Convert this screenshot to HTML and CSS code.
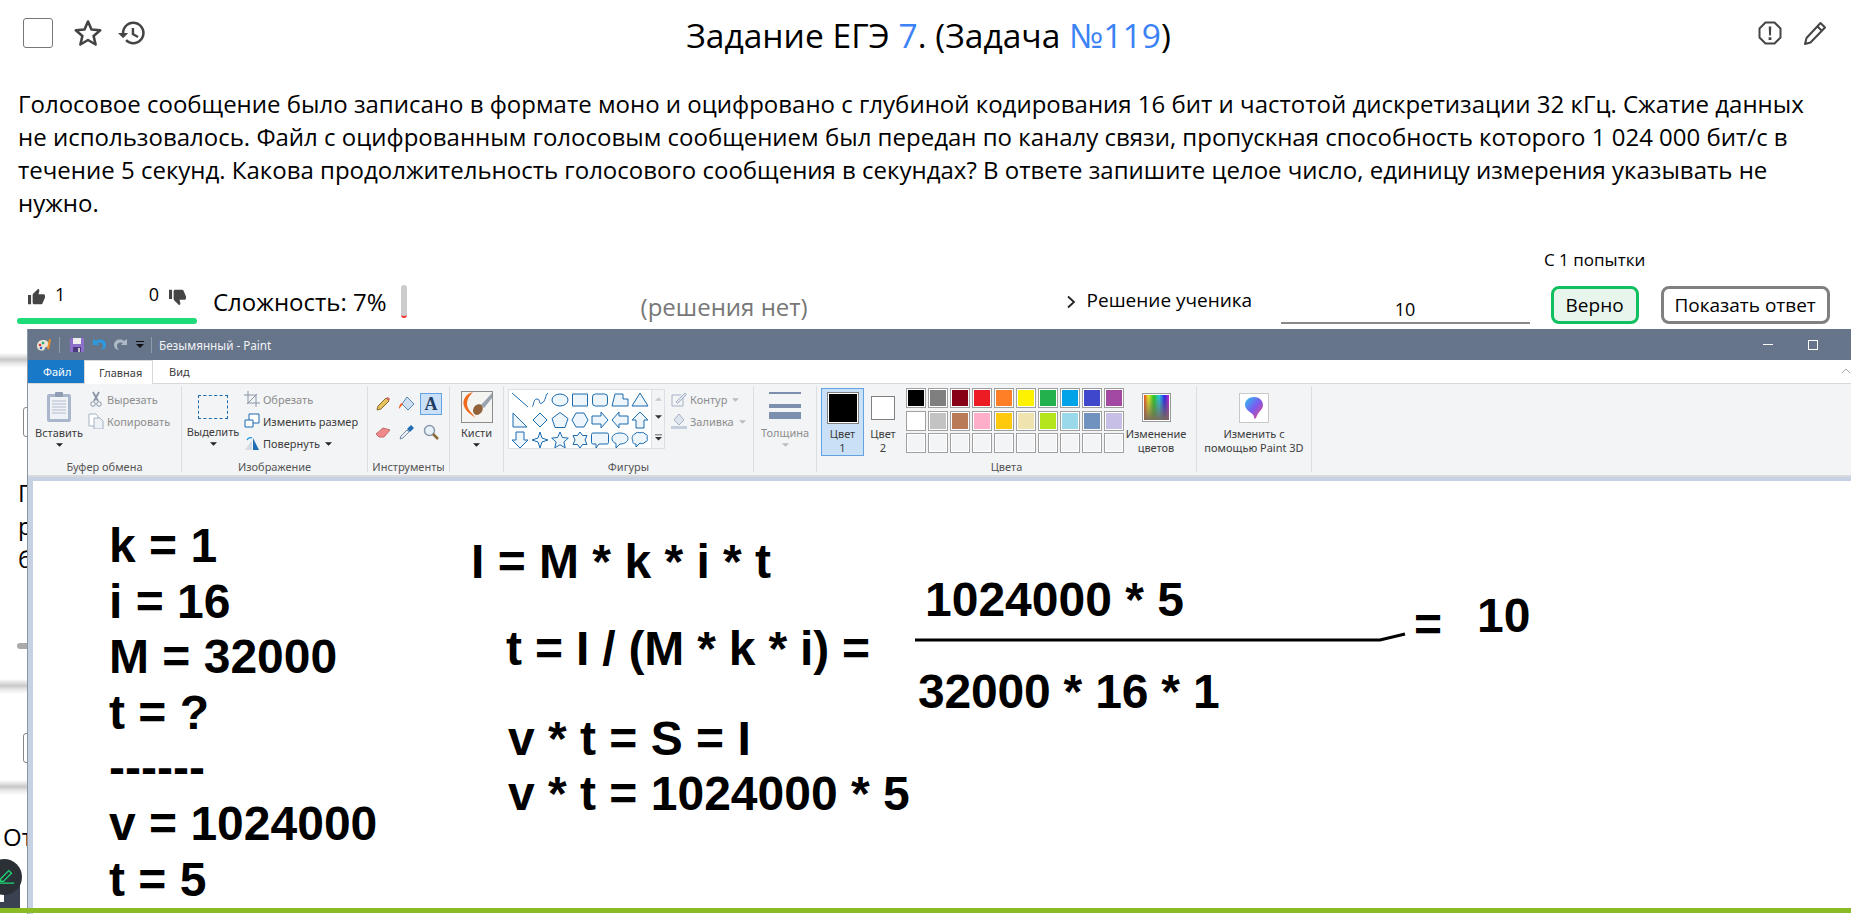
FILE: index.html
```html
<!DOCTYPE html>
<html lang="ru">
<head>
    <meta charset="UTF-8">
    <meta name="viewport" content="width=device-width, initial-scale=1.0">
    <title>Задание ЕГЭ 7</title>
    <link rel="stylesheet" href="styles.css">
</head>
<body>

    <svg class="defs" width="0" height="0">
        <symbol id="caret" viewBox="0 0 8 4"><path d="M0 0h8L4 4z"/></symbol>
    </svg>

    <header class="task-head">
        <div class="head-left">
            <span class="check"></span>
            <svg class="ico star" viewBox="0 0 30 30"><path d="M15 3.5l3.5 8 8.7.8-6.6 5.7 2 8.5-7.6-4.5-7.6 4.5 2-8.5-6.6-5.7 8.7-.8z"/></svg>
            <svg class="ico history" viewBox="1 3 22 18"><path d="M13 3a9 9 0 0 0-9 9H1l3.89 3.89.07.14L9 12H6c0-3.87 3.13-7 7-7s7 3.13 7 7-3.13 7-7 7c-1.93 0-3.68-.79-4.94-2.06l-1.42 1.42A8.954 8.954 0 0 0 13 21a9 9 0 0 0 0-18zm-1.2 5v5.4l4.48 2.54.9-1.5-3.5-2V8h-1.88z"/></svg>
        </div>
        <h1 class="task-title">Задание ЕГЭ <a class="num">7</a>. (Задача <a class="num">№119</a>)</h1>
        <div class="head-right">
            <svg class="ico alert" viewBox="0 0 24 24"><path class="line" d="M7.5 1.5h9l6 6v9l-6 6h-9l-6-6v-9z"/><path d="M10.7 5.5h2.6l-.4 9h-1.8zM10.6 16.3h2.8v2.6h-2.8z"/></svg>
            <svg class="ico pen" viewBox="0 0 24 24"><path class="line" d="M17.5 2L22 6.5 7.5 21.5 2 23l1.5-6zM14.5 5.5l4.5 4.5"/></svg>
        </div>
    </header>

    <p class="task-text">Голосовое сообщение было записано в формате моно и оцифровано с глубиной кодирования 16 бит и частотой дискретизации 32 кГц. Сжатие данных не использовалось. Файл с оцифрованным голосовым сообщением был передан по каналу связи, пропускная способность которого 1 024 000 бит/с в течение 5 секунд. Какова продолжительность голосового сообщения в секундах? В ответе запишите целое число, единицу измерения указывать не нужно.</p>

    <div class="attempts">С 1 попытки</div>

    <section class="task-bar">
        <div class="votes">
            <div class="votes-row">
                <svg class="thumb" viewBox="1 1 22 20"><path d="M1 21h4V9H1v12zm22-11c0-1.1-.9-2-2-2h-6.31l.95-4.57.03-.32c0-.41-.17-.79-.44-1.06L14.17 1 7.59 7.59C7.22 7.95 7 8.45 7 9v10c0 1.1.9 2 2 2h9c.83 0 1.54-.5 1.84-1.22l3.02-7.05c.09-.23.14-.47.14-.73v-2z"/></svg>
                <span class="vote-up">1</span>
                <span class="vote-down">0</span>
                <svg class="thumb down" viewBox="1 1 22 20"><path d="M1 21h4V9H1v12zm22-11c0-1.1-.9-2-2-2h-6.31l.95-4.57.03-.32c0-.41-.17-.79-.44-1.06L14.17 1 7.59 7.59C7.22 7.95 7 8.45 7 9v10c0 1.1.9 2 2 2h9c.83 0 1.54-.5 1.84-1.22l3.02-7.05c.09-.23.14-.47.14-.73v-2z"/></svg>
            </div>
            <div class="votes-bar"></div>
        </div>
        <div class="difficulty">Сложность: 7%</div>
        <div class="difficulty-meter"></div>
        <div class="no-solution">(решения нет)</div>
        <div class="student">
            <svg class="chevron" viewBox="0 0 10 14"><path d="M2 1.5L8 7l-6 5.5"/></svg>
            <span>Решение ученика</span>
        </div>
        <div class="answer">10</div>
        <button class="btn btn-ok">Верно</button>
        <button class="btn btn-show">Показать ответ</button>
    </section>

    <section class="under">
        <div class="band"></div>
        <div class="under-box"></div>
        <p class="under-text">Г<br>р<br>б</p>
        <div class="under-pill"></div>
        <div class="band band-2"></div>
        <div class="under-box"></div>
        <div class="band band-3"></div>
        <p class="under-from">От</p>
    </section>

    <div class="dock">
        <div class="dock-tile"></div>
        <div class="dock-round">
            <svg viewBox="0 0 20 20"><path d="M3 13l9-9 3 3-9 9H3zM1 18h17"/></svg>
        </div>
    </div>

    <div class="paint">
        <div class="titlebar">
            <svg class="qa" viewBox="0 0 16 16"><path fill="#e9e3d4" d="M1 9c0-4 3-6 6-6 4 0 6 2 6 5 0 2-2 2-3 2s-1 2-2 3c-2 1-7 1-7-4z"/><circle cx="4" cy="8" r="1.3" fill="#d33"/><circle cx="7" cy="6" r="1.3" fill="#2a7"/><circle cx="5" cy="11" r="1.3" fill="#36c"/><path d="M11 12l2-10 2 .5-2 10z" fill="#f0902a"/></svg>
            <i class="qa-sep"></i>
            <svg class="qa qa-save" viewBox="0 0 14 14"><path fill="#8b6fc9" d="M0 0h14v14H0z"/><path fill="#eee" d="M3 0h8v6H3z"/><path fill="#4a3a80" d="M3 9h8v5H3z"/><path fill="#ccc" d="M8 10h2v4H8z"/></svg>
            <svg class="qa qa-undo" viewBox="0 0 14 14"><path d="M1 1v6h6L5 5c3-1.5 6 0 6 3 0 2-1 3-2 4 4-.5 5-3 5-5 0-5-6-7-10-4z" fill="#2b9be0"/></svg>
            <svg class="qa qa-redo" viewBox="0 0 14 14"><path d="M13 1v6H7l2-2C6 3.5 3 5 3 8c0 2 1 3 2 4-4-.5-5-3-5-5 0-5 6-7 10-4z" fill="#aeb9c6"/></svg>
            <svg class="qa-more" viewBox="0 0 8 8"><path d="M0 0h8v1H0zM0 3h8L4 7z"/></svg>
            <i class="qa-sep"></i>
            <span class="win-title">Безымянный - Paint</span>
            <div class="win-btns">
                <i class="win-min"></i>
                <i class="win-max"></i>
            </div>
        </div>

        <nav class="tabs">
            <span class="tab tab-file">Файл</span>
            <span class="tab tab-on">Главная</span>
            <span class="tab">Вид</span>
            <svg class="collapse" viewBox="0 0 10 6"><path d="M1 5l4-4 4 4"/></svg>
        </nav>

        <div class="ribbon">
            <div class="group g-clip">
                <div class="group-body">
                    <div class="big big-paste">
                        <svg class="big-ico" viewBox="0 0 26 32"><rect x="1" y="3" width="24" height="28" rx="2" fill="#a9b6cc"/><rect x="4" y="6" width="18" height="22" fill="#eef1f6"/><path d="M6 10h14M6 13h14M6 16h14M6 19h14M6 22h14" stroke="#b4bccb"/><rect x="9" y="1" width="8" height="5" rx="1" fill="#8f9cb4"/></svg>
                        <span>Вставить</span>
                        <svg class="caret"><use href="#caret"/></svg>
                    </div>
                    <div class="small-list">
                        <div class="small off">
                            <svg viewBox="0 0 16 16"><path d="M5 1l5 9M11 1L6 10" stroke="#8a96a6" stroke-width="1.8" fill="none"/><circle cx="5" cy="13" r="2.3" fill="none" stroke="#8a96a6"/><circle cx="11" cy="13" r="2.3" fill="none" stroke="#8a96a6"/></svg>
                            <span>Вырезать</span>
                        </div>
                        <div class="small off">
                            <svg viewBox="0 0 16 16"><path d="M1 1h7l2 2v10H1z" fill="#fff" stroke="#a6b2c4"/><path d="M6 5h6l3 3v8H6z" fill="#eef2f7" stroke="#a6b2c4"/></svg>
                            <span>Копировать</span>
                        </div>
                    </div>
                </div>
                <div class="group-label">Буфер обмена</div>
            </div>

            <div class="group g-image">
                <div class="group-body">
                    <div class="big big-select">
                        <i class="dashed"></i>
                        <span>Выделить</span>
                        <svg class="caret"><use href="#caret"/></svg>
                    </div>
                    <div class="small-list">
                        <div class="small off">
                            <svg viewBox="0 0 16 16"><path d="M4 0v12h12M0 4h12v12M3 13L13 3" fill="none" stroke="#8a96a6"/></svg>
                            <span>Обрезать</span>
                        </div>
                        <div class="small">
                            <svg viewBox="0 0 16 16"><path d="M5 1h10v9H5z" fill="#fff" stroke="#1a6bb0"/><path d="M1 7h8v7H1z" fill="#fff" stroke="#1a6bb0"/></svg>
                            <span>Изменить размер</span>
                        </div>
                        <div class="small">
                            <svg viewBox="0 0 16 16"><path d="M1 15L8 5v10z" fill="#d5dbe4"/><path d="M9 3l6 12H9z" fill="#1f6db3"/><path d="M3 5c1-2 3-3 5-2" fill="none" stroke="#2b9be0" stroke-width="1.4"/></svg>
                            <span>Повернуть</span>
                            <svg class="caret caret-in"><use href="#caret"/></svg>
                        </div>
                    </div>
                </div>
                <div class="group-label">Изображение</div>
            </div>

            <div class="group g-tools">
                <div class="group-body">
                    <div class="tools">
                        <div class="tool"><svg viewBox="0 0 16 16"><path d="M2 14l1-4 8-8 3 3-8 8z" fill="#e7c060" stroke="#8a6a2a"/><path d="M11 2l3 3 1-2-2-2z" fill="#d86a6a"/></svg></div>
                        <div class="tool"><svg viewBox="0 0 16 16"><path d="M8 1l7 7-6 6-6-6z" fill="#cfe0f2" stroke="#5b86ad"/><path d="M4 7C1 7 0 10 0 13l3-4z" fill="#f05a1c"/></svg></div>
                        <div class="tool tool-on"><span class="tool-a">A</span></div>
                        <div class="tool"><svg viewBox="0 0 16 16"><path d="M1 10l7-6 7 2-6 7H4z" fill="#f08a8a" stroke="#c26a6a"/></svg></div>
                        <div class="tool"><svg viewBox="0 0 16 16"><path d="M1 15l1-3 6-6 2 2-6 6z" fill="#e6edf5" stroke="#7b8ea3"/><path d="M8 5l4-4 3 3-4 4z" fill="#1f6db3"/></svg></div>
                        <div class="tool"><svg viewBox="0 0 16 16"><circle cx="6.5" cy="6.5" r="5" fill="#e8f0f8" stroke="#8a9aae" stroke-width="1.5"/><path d="M10 10l5 5" stroke="#8a6a3a" stroke-width="2.5"/></svg></div>
                    </div>
                </div>
                <div class="group-label">Инструменты</div>
            </div>

            <div class="group g-brush">
                <div class="group-body">
                    <div class="big">
                        <svg class="big-ico brush" viewBox="0 0 32 32"><rect x=".5" y=".5" width="31" height="31" fill="#f4f4f2" stroke="#8c8c8c"/><path d="M12 1c-8 2-11 9-9 14 2 6 7 8 11 12-2-5-8-8-8-14 0-5 3-9 6-12z" fill="#ef6a1e"/><path d="M12 20c0-5 5-8 9-6 2 4 0 9-5 10-2 0-4-2-4-4z" fill="#94623a"/><path d="M20 14L31 2v5L23 17z" fill="#9aa4b0"/></svg>
                        <span>Кисти</span>
                        <svg class="caret"><use href="#caret"/></svg>
                    </div>
                </div>
            </div>

            <div class="group g-shapes">
                <div class="group-body">
                    <div class="gallery">
                        <div class="shapes">
                            <svg viewBox="0 0 18 18"><path d="M1 2l16 14"/></svg>
                            <svg viewBox="0 0 18 18"><path class="nofill" d="M1 16c2-1 1-8 5-8s1 6 5 4 3-8 6-10"/></svg>
                            <svg viewBox="0 0 18 18"><ellipse cx="9" cy="9" rx="8" ry="6"/></svg>
                            <svg viewBox="0 0 18 18"><rect x="1.5" y="3" width="15" height="12"/></svg>
                            <svg viewBox="0 0 18 18"><rect x="1.5" y="3" width="15" height="12" rx="3"/></svg>
                            <svg viewBox="0 0 18 18"><path d="M1 15L4 3h8v5h5v7z"/></svg>
                            <svg viewBox="0 0 18 18"><path d="M9 2l8 13H1z"/></svg>
                            <svg viewBox="0 0 18 18"><path d="M2 2l14 14H2z"/></svg>
                            <svg viewBox="0 0 18 18"><path d="M9 2l7 7-7 7-7-7z"/></svg>
                            <svg viewBox="0 0 18 18"><path d="M9 1.5l8 6-3 9H4l-3-9z"/></svg>
                            <svg viewBox="0 0 18 18"><path d="M5 2h8l4 7-4 7H5L1 9z"/></svg>
                            <svg viewBox="0 0 18 18"><path d="M1 5h9V1l7 8-7 8v-4H1z"/></svg>
                            <svg viewBox="0 0 18 18"><path d="M17 5H8V1L1 9l7 8v-4h9z"/></svg>
                            <svg viewBox="0 0 18 18"><path d="M5 17V9H1l8-8 8 8h-4v8z"/></svg>
                            <svg viewBox="0 0 18 18"><path d="M5 1v8H1l8 8 8-8h-4V1z"/></svg>
                            <svg viewBox="0 0 18 18"><path d="M9 1l2 6 6 2-6 2-2 6-2-6-6-2 6-2z"/></svg>
                            <svg viewBox="0 0 18 18"><path d="M9 1l2.4 5.5 5.9.6-4.4 3.9 1.3 5.8L9 13.8l-5.2 3 1.3-5.8L.7 7.1l5.9-.6z"/></svg>
                            <svg viewBox="0 0 18 18"><path d="M9 1l2.5 3.5H16L14 9l2 4.5h-4.5L9 17l-2.5-3.5H2L4 9 2 4.5h4.5z"/></svg>
                            <svg viewBox="0 0 18 18"><path d="M2 2h14q1.5 0 1.5 1.5v8q0 1.5-1.5 1.5H8l-3 4v-4H2q-1.5 0-1.5-1.5v-8Q.5 2 2 2z"/></svg>
                            <svg viewBox="0 0 18 18"><path d="M9 2c5 0 8 2.5 8 5.500S14 13 9 13l-4 4v-4.500C2 11.500 1 9.500 1 7.500 1 4.500 4 2 9 2z"/></svg>
                            <svg viewBox="0 0 18 18"><path d="M4 3c1-2 4-2 5-1 1-1 4-1 5 1 2 0 3 2 2 4 1 2 0 4-2 4-1 2-4 2-5 1l-4 4v-3c-2 0-4-1-3-3C0 7 2 3 4 3z"/></svg>
                        </div>
                        <div class="gallery-scroll">
                            <svg viewBox="0 0 8 4" class="scroll-up"><path d="M4 0l4 4H0z"/></svg>
                            <svg viewBox="0 0 8 4" class="scroll-dn"><path d="M0 0h8L4 4z"/></svg>
                            <svg viewBox="0 0 8 7" class="scroll-more"><path d="M0 0h8v1H0zM0 3h8L4 7z"/></svg>
                        </div>
                    </div>
                    <div class="small-list shape-opts">
                        <div class="small off">
                            <svg viewBox="0 0 16 16"><path d="M1 4h9M1 4v11h11V7" fill="none" stroke="#a6b2c4"/><path d="M5 11l9-9 1.5 1.5-9 9z" fill="#dfe5ee" stroke="#a6b2c4"/></svg>
                            <span>Контур</span>
                            <svg class="caret caret-in"><use href="#caret"/></svg>
                        </div>
                        <div class="small off">
                            <svg viewBox="0 0 16 16"><path d="M8 1l5 6-5 5-5-5z" fill="#dfe5ee" stroke="#a6b2c4"/><path d="M0 13h16v3H0z" fill="#c4cfde"/></svg>
                            <span>Заливка</span>
                            <svg class="caret caret-in"><use href="#caret"/></svg>
                        </div>
                    </div>
                </div>
                <div class="group-label">Фигуры</div>
            </div>

            <div class="group g-size">
                <div class="group-body">
                    <div class="big off">
                        <div class="size-lines"><i class="w1"></i><i class="w2"></i><i class="w3"></i></div>
                        <span>Толщина</span>
                        <svg class="caret"><use href="#caret"/></svg>
                    </div>
                </div>
            </div>

            <div class="group g-colors">
                <div class="group-body">
                    <div class="color-slot slot-on">
                        <i class="slot-box slot-black"></i>
                        <span>Цвет<br>1</span>
                    </div>
                    <div class="color-slot">
                        <i class="slot-box slot-white"></i>
                        <span>Цвет<br>2</span>
                    </div>
                    <div class="palette">
                        <i class="c-000"></i><i class="c-7f7"></i><i class="c-880"></i><i class="c-ed1"></i><i class="c-ff7"></i><i class="c-fff2"></i><i class="c-22b"></i><i class="c-00a"></i><i class="c-3f4"></i><i class="c-a34"></i>
                        <i class="c-fff"></i><i class="c-c3c"></i><i class="c-b97"></i><i class="c-ffa"></i><i class="c-ffc"></i><i class="c-efe"></i><i class="c-b5e"></i><i class="c-99d"></i><i class="c-709"></i><i class="c-c8b"></i>
                        <i></i><i></i><i></i><i></i><i></i><i></i><i></i><i></i><i></i><i></i>
                    </div>
                    <div class="big big-edit">
                        <i class="rainbow"></i>
                        <span>Изменение<br>цветов</span>
                    </div>
                </div>
                <div class="group-label">Цвета</div>
            </div>

            <div class="group g-3d">
                <div class="group-body">
                    <div class="big big-3d">
                        <div class="p3d">
                            <svg viewBox="0 0 20 24"><defs><linearGradient id="drop" x1="0" y1="0" x2="1" y2="1"><stop offset="0" stop-color="#25c4f0"/><stop offset=".5" stop-color="#7a5cf0"/><stop offset="1" stop-color="#f0437c"/></linearGradient></defs><path d="M10 1c5 0 9 3.5 9 8 0 5-5 6-7 13-1 1-2 1-2-1 0-4-9-6-9-12 0-4.5 4-8 9-8z" fill="url(#drop)"/></svg>
                        </div>
                        <span>Изменить с<br>помощью Paint 3D</span>
                    </div>
                </div>
            </div>
        </div>

        <div class="canvas-area">
            <div class="canvas">
                <div class="note-col">k = 1<br>i = 16<br>M = 32000<br>t = ?<br>------<br>v = 1024000<br>t = 5</div>
                <div class="note n-formula">I = M * k * i * t</div>
                <div class="note n-solve">t = I / (M * k * i) =</div>
                <div class="note n-top">1024000 * 5</div>
                <svg class="frac" viewBox="0 0 500 12"><path d="M2 9h465l25-6"/></svg>
                <div class="note n-eq">=</div>
                <div class="note n-res">10</div>
                <div class="note n-bottom">32000 * 16 * 1</div>
                <div class="note n-v1">v * t = S = I</div>
                <div class="note n-v2">v * t = 1024000 * 5</div>
            </div>
        </div>
    </div>

    <div class="page-line"></div>

</body>
</html>
```

FILE: styles.css
```css
* {
    box-sizing: border-box;
}

html, body {
    height: 914px;
    overflow: hidden;
}

body {
    margin: 0;
    position: relative;
    background-color: #fff;
    color: #000;
    font-family: "Open Sans", "Noto Sans", sans-serif;
}

.defs {
    position: absolute;
}

i {
    display: block;
}

/* task header */
.task-head {
    display: flex;
    align-items: flex-start;
    justify-content: space-between;
    height: 66px;
    padding: 18px 24px 0 23px;
    position: relative;
}

.head-left, .head-right {
    display: flex;
    align-items: center;
}

.check {
    display: block;
    width: 30px;
    height: 30px;
    border: 1.5px solid #777;
    border-radius: 3px;
    margin-right: 20px;
}

.ico {
    fill: #444;
}

.star {
    width: 30px;
    height: 30px;
    fill: none;
    stroke: #444;
    stroke-width: 2.6;
    stroke-linejoin: round;
    margin-right: 15px;
}

.history {
    width: 28px;
    height: 24px;
}

.head-right {
    margin-top: 3px;
    gap: 21px;
}

.alert, .pen {
    width: 24px;
    height: 24px;
}

.line {
    fill: none;
    stroke: #444;
    stroke-width: 2;
    stroke-linejoin: round;
}

.task-title {
    position: absolute;
    left: 6px;
    right: 0;
    top: 15px;
    margin: 0;
    text-align: center;
    font-size: 33.6px;
    font-weight: 400;
    line-height: 40px;
}

.num {
    color: #3b82f6;
}

.task-text {
    margin: 21px 40px 0 18px;
    font-size: 24px;
    line-height: 33px;
}

.attempts {
    margin: 31px 0 10px 1544px;
    font-size: 17px;
    line-height: 20px;
}

/* votes, difficulty, answer */
.task-bar {
    display: flex;
    height: 44px;
    padding-left: 17px;
}

.votes {
    width: 180px;
}

.votes-row {
    display: flex;
    align-items: center;
    height: 28px;
    margin-top: 2px;
    padding: 0 11px;
    font-size: 18px;
}

.thumb {
    width: 17px;
    height: 17px;
    fill: #444;
}

.thumb.down {
    transform: scaleY(-1);
    margin-top: 2px;
}

.vote-up, .vote-down {
    margin-bottom: 4px;
}

.vote-up {
    margin-left: 10px;
}

.vote-down {
    margin-left: auto;
    margin-right: 10px;
}

.votes-bar {
    height: 6px;
    margin-top: 8px;
    border-radius: 3px;
    background-color: #1cdb78;
}

.difficulty {
    margin: 7px 0 0 16px;
    font-size: 24px;
    line-height: 30px;
}

.difficulty-meter {
    width: 6px;
    height: 33px;
    margin: 5px 0 0 14px;
    border-radius: 3px;
    background-color: #ccc;
    border-bottom: 2px solid #e33;
}

.no-solution {
    width: 425px;
    margin: 12px 0 0 234px;
    color: #777;
    font-size: 24px;
    line-height: 30px;
}

.student {
    display: flex;
    align-items: center;
    width: 215px;
    height: 26px;
    margin-top: 7px;
    font-size: 19px;
}

.chevron {
    width: 10px;
    height: 14px;
    margin: 3px 11px 0 0;
    fill: none;
    stroke: #222;
    stroke-width: 1.8;
}

.answer {
    width: 249px;
    height: 38px;
    margin-top: 6px;
    padding-top: 10px;
    border-bottom: 2px solid #888;
    text-align: center;
    font-size: 18px;
    line-height: 26px;
}

.btn {
    height: 38px;
    margin: 6px 0 0 21px;
    padding: 0;
    border: 3px solid #808080;
    border-radius: 8px;
    background-color: #fff;
    color: #000;
    font-family: inherit;
    font-size: 19px;
}

.btn-ok {
    width: 88px;
    border-color: #10c060;
    background-color: #e8f5ec;
}

.btn-show {
    width: 169px;
    margin-left: 22px;
}

/* page parts left of the Paint window */
.under {
    width: 27px;
}

.band {
    height: 15px;
    margin-top: 29px;
    background: linear-gradient(#fff, #c8c8c8 45%, #e8e8e8 70%, #fff);
}

.under-box {
    width: 30px;
    height: 30px;
    margin: 39px 0 0 23px;
    border: 1.5px solid #888;
    border-radius: 3px;
}

.under-text {
    margin: 39px 0 0 18px;
    font-size: 24px;
    line-height: 33px;
}

.under-pill {
    width: 20px;
    height: 6px;
    margin: 68px 0 0 17px;
    border-radius: 3px;
    background-color: #aaa;
}

.band-2 {
    margin-top: 30px;
}

.band-3 {
    margin-top: 17px;
}

.under-from {
    margin: 28px 0 0 3px;
    font-size: 24px;
    line-height: 27px;
    white-space: nowrap;
}

.dock {
    position: absolute;
    left: 0;
    top: 859px;
    width: 27px;
    height: 50px;
}

.dock-tile {
    position: absolute;
    left: 0;
    top: 15px;
    width: 20px;
    height: 35px;
    background-color: #3a4150;
}

.dock-tile::after {
    content: "";
    position: absolute;
    left: 0;
    top: 18px;
    width: 4px;
    height: 10px;
    background-color: #fff;
}

.dock-round {
    position: absolute;
    left: -14px;
    top: 0;
    width: 36px;
    height: 36px;
    border-radius: 50%;
    background-color: #2b2f36;
}

.dock-round svg {
    position: absolute;
    left: 12px;
    top: 8px;
    width: 18px;
    height: 18px;
    fill: none;
    stroke: #1cdb78;
    stroke-width: 1.4;
}

.page-line {
    position: absolute;
    left: 0;
    right: 0;
    bottom: 1px;
    height: 5px;
    background-color: #8aba24;
}

/* Paint window */
.paint {
    position: absolute;
    left: 27px;
    top: 329px;
    width: 1824px;
    height: 585px;
    overflow: hidden;
    border-left: 1px solid #8a95a5;
    font-family: "Noto Sans", sans-serif;
    font-size: 11px;
    color: #3c3c3c;
}

.titlebar {
    display: flex;
    align-items: center;
    height: 31px;
    padding-left: 8px;
    background-color: #66758a;
    color: #f2f4f6;
}

.qa {
    width: 16px;
    height: 16px;
}

.qa-sep {
    width: 1px;
    height: 16px;
    margin: 0 7px;
    background-color: #8f9bad;
}

.qa-save {
    width: 14px;
    height: 14px;
    margin-left: 3px;
}

.qa-undo, .qa-redo {
    width: 14px;
    height: 14px;
    margin-left: 8px;
}

.qa-more {
    width: 8px;
    height: 8px;
    margin-left: 8px;
    fill: #111;
}

.win-title {
    font-size: 11.7px;
}

.win-btns {
    display: flex;
    align-items: center;
    margin-left: auto;
    margin-right: 33px;
    gap: 35px;
}

.win-min {
    width: 10px;
    height: 1px;
    background-color: #fff;
}

.win-max {
    width: 10px;
    height: 10px;
    border: 1px solid #fff;
}

.tabs {
    display: flex;
    height: 24px;
    border-bottom: 1px solid #d8d8d8;
    position: relative;
    line-height: 23px;
}

.tab {
    width: 50px;
    padding-left: 16px;
}

.tab-file {
    width: 56px;
    padding-left: 15px;
    background-color: #1979c9;
    color: #fff;
}

.tab-on {
    width: 69px;
    height: 24px;
    padding-left: 14px;
    background-color: #fff;
    border: 1px solid #d8d8d8;
    border-bottom: 0;
}

.collapse {
    position: absolute;
    right: 0;
    top: 8px;
    width: 10px;
    height: 6px;
    fill: none;
    stroke: #aaa;
}

.ribbon {
    display: flex;
    height: 93px;
    padding-top: 2px;
    background-color: #f3f4f6;
    border-bottom: 2px solid #d8dade;
}

.group {
    display: flex;
    flex-direction: column;
    height: 86px;
    border-right: 1px solid #dcdee2;
}

.group-body {
    display: flex;
    height: 74px;
    padding-top: 2px;
}

.group-label {
    height: 10px;
    line-height: 14px;
    text-align: center;
    color: #555;
}

.g-clip { width: 154px; }
.g-image { width: 186px; }
.g-tools { width: 82px; }
.g-brush { width: 54px; }
.g-shapes { width: 250px; }
.g-size { width: 63px; }
.g-colors { width: 380px; }
.g-3d { width: 115px; }

.big {
    display: flex;
    flex-direction: column;
    align-items: center;
    text-align: center;
    line-height: 18px;
}

.big-ico {
    width: 32px;
    height: 32px;
    margin-top: 3px;
    margin-bottom: 1px;
}

.caret {
    width: 7px;
    height: 4px;
    margin-top: 1px;
    fill: #222;
}

.caret-in {
    margin-left: 5px;
}

.off {
    color: #8d8d8d;
}

.off .caret {
    fill: #bbb;
}

.big-paste {
    width: 62px;
}

.big-paste .big-ico {
    width: 26px;
}

.g-clip .small-list {
    margin-left: -2px;
}

.small-list {
    display: flex;
    flex-direction: column;
    margin-left: 20px;
}

.small {
    display: flex;
    align-items: center;
    height: 22px;
    white-space: nowrap;
}

.small > svg:first-child {
    width: 16px;
    height: 16px;
    margin-right: 3px;
}

.big-select {
    width: 62px;
}

.dashed {
    width: 30px;
    height: 24px;
    margin: 7px 0 4px;
    border: 1px dashed #1a6bb0;
}

.g-image .small-list {
    margin-left: 0;
}

.tools {
    display: grid;
    grid-template-columns: repeat(3, 24px);
    grid-template-rows: 28px 28px;
    margin: 5px 0 0 4px;
}

.tool {
    display: flex;
    align-items: center;
    justify-content: center;
    width: 22px;
    height: 22px;
}

.tool svg {
    width: 16px;
    height: 16px;
}

.tool-on {
    background-color: #c9e0f7;
    border: 1px solid #64a3e3;
}

.tool-a {
    font-family: "Liberation Serif", serif;
    font-size: 18px;
    font-weight: 700;
    color: #1f3c66;
    line-height: 20px;
}

.g-brush .big {
    width: 53px;
}

.gallery {
    display: flex;
    width: 157px;
    height: 60px;
    margin: 1px 0 0 4px;
    border: 1px solid #dcdfe4;
    background-color: #fff;
}

.shapes {
    display: grid;
    grid-template-columns: repeat(7, 20px);
    grid-template-rows: repeat(3, 20px);
    width: 142px;
    padding-left: 1px;
}

.shapes svg {
    width: 18px;
    height: 18px;
    margin: 1px;
    fill: #eef5fb;
    stroke: #1a6bb0;
    stroke-width: 1;
    stroke-linejoin: round;
}

.shapes .nofill {
    fill: none;
}

.gallery-scroll {
    display: flex;
    flex-direction: column;
    align-items: center;
    justify-content: space-around;
    flex: 1;
    background-color: #f3f4f6;
    border-left: 1px solid #dcdfe4;
}

.gallery-scroll svg {
    width: 7px;
    height: 4px;
    fill: #333;
}

.gallery-scroll .scroll-up {
    fill: #c4c8cf;
}

.gallery-scroll .scroll-more {
    height: 7px;
}

.shape-opts {
    margin-left: 6px;
}

.size-lines {
    width: 32px;
    margin: 4px 0 5px;
}

.size-lines i {
    background-color: #7d8fae;
}

.size-lines .w1 { height: 2px; margin-bottom: 9.5px; }
.size-lines .w2 { height: 4px; margin-bottom: 4.5px; }
.size-lines .w3 { height: 7px; }

.g-size .big {
    width: 62px;
}

.color-slot {
    display: flex;
    flex-direction: column;
    align-items: center;
    width: 43px;
    height: 68px;
    margin: 0 4px 0;
    border: 1px solid transparent;
    text-align: center;
    line-height: 13.5px;
}

.slot-on {
    background-color: #c9e0f7;
    border-color: #64a3e3;
}

.slot-box {
    width: 32px;
    height: 32px;
    margin: 3px 0 3px;
    border: 1px solid #808080;
}

.slot-black {
    background-color: #000;
    box-shadow: inset 0 0 0 1px #fff;
}

.slot-white {
    width: 24px;
    height: 24px;
    margin: 7px 0 7px;
    background-color: #fff;
}

.color-slot + .color-slot {
    width: 30px;
    margin-left: 0;
    margin-right: 8px;
}

.palette {
    display: grid;
    grid-template-columns: repeat(10, 20px);
    grid-template-rows: repeat(3, 20px);
    gap: 2.5px 2px;
    margin: 0;
}

.palette i {
    border: 1px solid #a0a0a0;
    box-shadow: inset 0 0 0 1px #fff;
}

.c-000 { background-color: #000; }
.c-7f7 { background-color: #7f7f7f; }
.c-880 { background-color: #880015; }
.c-ed1 { background-color: #ed1c24; }
.c-ff7 { background-color: #ff7f27; }
.c-fff2 { background-color: #fff200; }
.c-22b { background-color: #22b14c; }
.c-00a { background-color: #00a2e8; }
.c-3f4 { background-color: #3f48cc; }
.c-a34 { background-color: #a349a4; }
.c-fff { background-color: #fff; }
.c-c3c { background-color: #c3c3c3; }
.c-b97 { background-color: #b97a57; }
.c-ffa { background-color: #ffaec9; }
.c-ffc { background-color: #ffc90e; }
.c-efe { background-color: #efe4b0; }
.c-b5e { background-color: #b5e61d; }
.c-99d { background-color: #99d9ea; }
.c-709 { background-color: #7092be; }
.c-c8b { background-color: #c8bfe7; }

.big-edit {
    width: 68px;
    margin-left: -2px;
    line-height: 13.5px;
}

.rainbow {
    width: 29px;
    height: 29px;
    margin: 5px 0 5px;
    border: 1px solid #999;
    box-shadow: inset 0 0 0 1px #fff;
    background: linear-gradient(transparent, #7a6a5a), linear-gradient(90deg, #e22, #ee2, #2c2, #2ce, #22e, #e2c);
}

.big-3d {
    width: 114px;
    line-height: 13.5px;
    white-space: nowrap;
}

.p3d {
    display: flex;
    align-items: center;
    justify-content: center;
    width: 30px;
    height: 30px;
    margin: 5px 0 4px;
    background-color: #fff;
    border: 1px solid #c8c8c8;
}

.p3d svg {
    width: 20px;
    height: 24px;
}

.canvas-area {
    height: 437px;
    padding: 4px 0 0 5px;
    background-color: #c6d1e3;
}

.canvas {
    position: relative;
    height: 100%;
    background-color: #fff;
    font-family: "Liberation Sans", Arial, sans-serif;
    font-size: 48px;
    font-weight: 700;
    color: #000;
}

.note-col {
    position: absolute;
    left: 76px;
    top: 37px;
    line-height: 55.6px;
}

.note {
    position: absolute;
    line-height: 1;
    white-space: nowrap;
}

.n-formula { left: 438px; top: 57px; }
.n-solve { left: 473px; top: 144px; letter-spacing: -0.2px; }
.n-top { left: 892px; top: 95px; }
.n-eq { left: 1381px; top: 120px; }
.n-res { left: 1444px; top: 111px; }
.n-bottom { left: 885px; top: 187px; letter-spacing: -0.2px; }
.n-v1 { left: 475px; top: 234px; }
.n-v2 { left: 475px; top: 289px; }

.frac {
    position: absolute;
    left: 880px;
    top: 150px;
    width: 500px;
    height: 12px;
    fill: none;
    stroke: #000;
    stroke-width: 3;
}
```
